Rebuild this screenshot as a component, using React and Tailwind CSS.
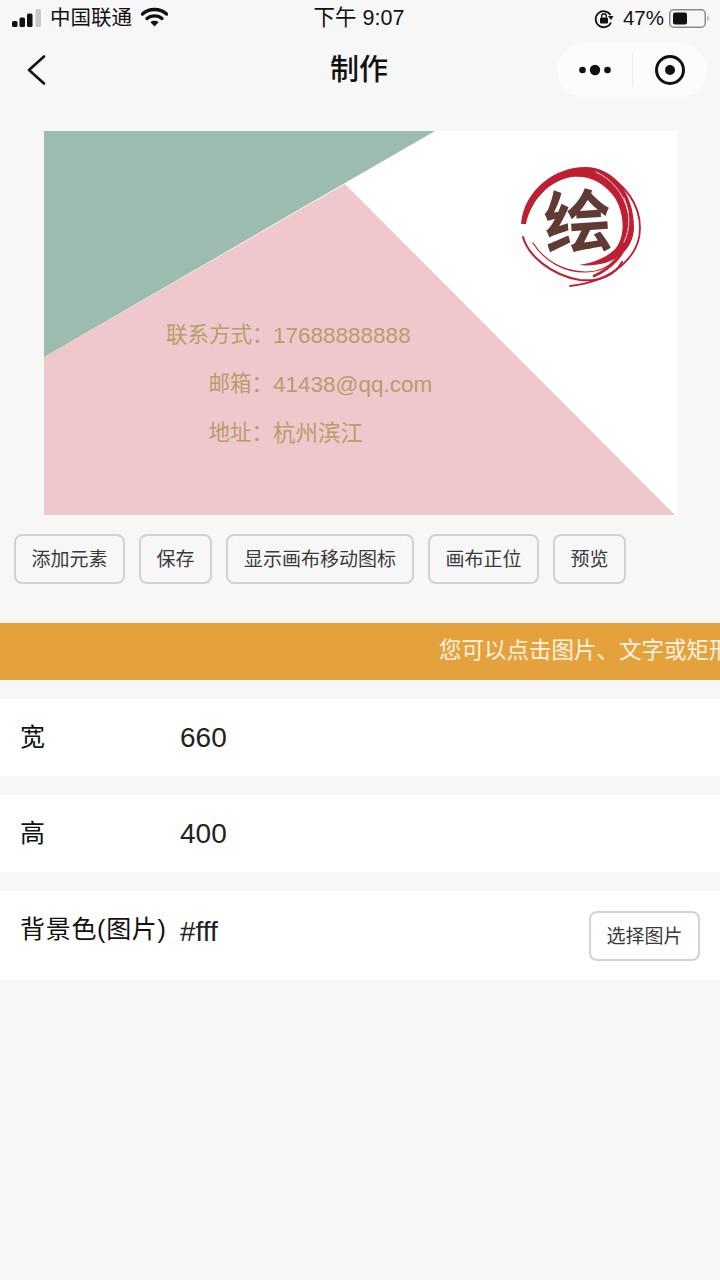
// status bar bits
function Signal() {
    return (
        <svg width="30" height="20" viewBox="0 0 30 20" className="block">
            <rect x="0" y="12" width="5.5" height="6" rx="1.5" fill="#111" />
            <rect x="7.5" y="8.5" width="5.5" height="9.5" rx="1.5" fill="#111" />
            <rect x="15" y="4.5" width="5.5" height="13.5" rx="1.5" fill="#111" />
            <rect x="23.5" y="0" width="5.5" height="18" rx="1.5" fill="#c9c9c9" />
        </svg>
    );
}

function Wifi() {
    return (
        <svg width="27" height="20" viewBox="0 0 27 20" className="block">
            <path d="M1.5 7 C8 1 19 1 25.5 7" fill="none" stroke="#111" strokeWidth="3.4" strokeLinecap="round" />
            <path d="M6 11.5 C10 8 17 8 21 11.5" fill="none" stroke="#111" strokeWidth="3.4" strokeLinecap="round" />
            <path d="M13.5 19.5 L9.5 15.2 C11.5 13.4 15.5 13.4 17.5 15.2 Z" fill="#111" />
        </svg>
    );
}

function RotationLock() {
    return (
        <svg width="20" height="20" viewBox="0 0 20 20" className="block">
            <path d="M16.5 6 A8 8 0 1 0 17 13.5" fill="none" stroke="#111" strokeWidth="1.8" />
            <path d="M14 7 L19.5 7 L17 11 Z" fill="#111" />
            <rect x="6" y="8.5" width="8" height="6" rx="1" fill="#111" />
            <path d="M7.7 8.5 V7 A2.3 2.3 0 0 1 12.3 7 V8.5" fill="none" stroke="#111" strokeWidth="1.4" />
        </svg>
    );
}

function Battery() {
    return (
        <svg width="42" height="20" viewBox="0 0 42 20" className="block">
            <rect x="0.75" y="0.75" width="35.5" height="17.5" rx="4" fill="none" stroke="#8a8a8a" strokeWidth="1.5" />
            <rect x="4" y="3.5" width="14" height="12" rx="2" fill="#111" />
            <path d="M38.5 7 C40 7.5 40 11.5 38.5 12 Z" fill="#8a8a8a" />
        </svg>
    );
}

function Logo() {
    return (
        <svg width="160" height="150" viewBox="0 0 160 150" className="absolute left-[456px] top-[19px]">
            {/* main brush band */}
            <path
                d="M21 74 C24 40 55 17 85 17 C115 17 134 45 134 77 C134 95 122 108 105 113 C97 115 88 116 79 115 C92 113 107 108 116 98 C125 86 125 65 115 48 C104 32 88 25 72 27 C50 30 31 50 26 74 Z"
                fill="#bd2033"
            />
            <g fill="none" stroke="#fff" strokeLinecap="round">
                <path d="M96 22 C112 29 124 44 128 62" strokeWidth="0.8" />
                <path d="M124 48 C130 62 131 78 124 92" strokeWidth="0.8" />
            </g>
            <g fill="none" stroke="#bd2033" strokeLinecap="round">
                <path d="M100 22 C125 32 140 55 140 78 C140 105 115 131 70 136" strokeWidth="1.8" />
                <path d="M128 90 C124 104 112 118 94 126" strokeWidth="2.6" />
                <path d="M23 87 C28 105 50 125 80 130 C100 132 115 125 122 112" strokeWidth="2" />
                <path d="M33 93 C45 112 65 122 85 122 C100 122 110 116 116 108" strokeWidth="1.2" />
            </g>
            <text x="78" y="97" textAnchor="middle" fontSize="68" fontWeight="700" fill="#5f3b33" fontFamily="Noto Sans CJK SC, sans-serif" transform="rotate(-4 78 72)">绘</text>
        </svg>
    );
}

function OutlineButton({ children, className = "" }) {
    return (
        <button className={"h-[50px] px-[15.5px] rounded-lg border-2 border-[#d2d2d2] text-[19px] leading-none text-[#3a3a3a] shrink-0 " + className}>
            {children}
        </button>
    );
}

function FieldRow({ label, value, children, className }) {
    return (
        <div className={"flex bg-white pl-5 pr-5 mt-[19px] " + className}>
            <div className="w-[160px] text-[25px] leading-none text-[#111] tracking-[0.7px] whitespace-nowrap">{label}</div>
            <div className="flex-1 text-[28px] leading-none text-[#222] pt-px">{value}</div>
            {children}
        </div>
    );
}

export default function App() {
    return (
        <div className="w-[720px] h-[1280px] overflow-hidden bg-[#f7f7f7] font-['Liberation_Sans','Noto_Sans_CJK_SC',sans-serif]">
            {/* Status bar */}
            <div className="h-10 grid grid-cols-[1fr_auto_1fr] items-center text-[#111] text-[20.5px] leading-none">
                <div className="flex items-center pl-3 -mt-[3px]">
                    <Signal />
                    <span className="ml-2">中国联通</span>
                    <span className="ml-[9px] -mt-[3px]"><Wifi /></span>
                </div>
                <div className="-mt-[3px] -ml-[2px] text-[21.5px]">下午 9:07</div>
                <div className="flex items-center justify-end pr-[9px] -mt-[3px]">
                    <RotationLock />
                    <span className="ml-[9px]">47%</span>
                    <span className="ml-[5px]"><Battery /></span>
                </div>
            </div>

            {/* Nav bar */}
            <div className="h-[60px] grid grid-cols-[1fr_auto_1fr] items-center">
                <div className="pl-[27px]">
                    <svg width="20" height="32" viewBox="0 0 20 32" className="block">
                        <path d="M17 2.5 L2 16 L17 29.5" fill="none" stroke="#111" strokeWidth="2.6" strokeLinecap="round" strokeLinejoin="round" />
                    </svg>
                </div>
                <div className="text-[29px] font-medium leading-none text-[#111] -ml-[2px] mt-px">制作</div>
                <div className="flex justify-end pr-[13px]">
                    <div className="w-[150px] h-[55px] rounded-full bg-[#fcfcfc] flex items-center">
                        <div className="w-[75px] flex justify-center">
                            <svg width="34" height="14" viewBox="0 0 34 14" className="block">
                                <circle cx="4.5" cy="7" r="3.3" fill="#111" />
                                <circle cx="17" cy="7" r="5.2" fill="#111" />
                                <circle cx="29.5" cy="7" r="3.3" fill="#111" />
                            </svg>
                        </div>
                        <div className="w-px h-[34px] bg-[#ececec]" />
                        <div className="flex-1 flex justify-center pr-[1px]">
                            <svg width="32" height="32" viewBox="0 0 32 32" className="block">
                                <circle cx="16" cy="16" r="13.5" fill="none" stroke="#111" strokeWidth="3" />
                                <circle cx="16" cy="16" r="5" fill="#111" />
                            </svg>
                        </div>
                    </div>
                </div>
            </div>

            {/* Canvas */}
            <div className="relative w-[633px] h-[384px] ml-11 mt-[31px] bg-white overflow-hidden">
                <svg width="633" height="384" viewBox="0 0 633 384" className="absolute inset-0">
                    <polygon points="0,226 301,53 631,384 0,384" fill="#eec8cd" />
                    <polygon points="0,0 391,0 0,226" fill="#9cbcb0" />
                </svg>
                <Logo />
                <div className="absolute left-[122px] top-[180px] grid grid-cols-[107px_auto] text-[22.5px] leading-[49px] text-[#b99c6c] whitespace-nowrap">
                    <span className="text-[21.5px] text-right">联系方式：</span><span>17688888888</span>
                    <span className="text-[21.5px] text-right">邮箱：</span><span>41438@qq.com</span>
                    <span className="text-[21.5px] text-right">地址：</span><span>杭州滨江</span>
                </div>
            </div>

            {/* Toolbar */}
            <div className="flex gap-[14px] pl-[14px] mt-[19px]">
                <OutlineButton>添加元素</OutlineButton>
                <OutlineButton>保存</OutlineButton>
                <OutlineButton className="w-[188px]">显示画布移动图标</OutlineButton>
                <OutlineButton>画布正位</OutlineButton>
                <OutlineButton>预览</OutlineButton>
            </div>

            {/* Notice */}
            <div className="h-[57px] mt-[39px] bg-[#e5a13c] flex items-center pl-[439px] overflow-hidden whitespace-nowrap text-[22.5px] leading-none text-[#fdf3e2]">
                您可以点击图片、文字或矩形
            </div>

            {/* Fields */}
            <FieldRow label="宽" value="660" className="h-[77px] items-center" />
            <FieldRow label="高" value="400" className="h-[77px] items-center" />
            <FieldRow label="背景色(图片)" value="#fff" className="h-[89px] items-start pt-[26px]">
                <div className="-mt-[6px]">
                    <OutlineButton>选择图片</OutlineButton>
                </div>
            </FieldRow>
        </div>
    );
}
